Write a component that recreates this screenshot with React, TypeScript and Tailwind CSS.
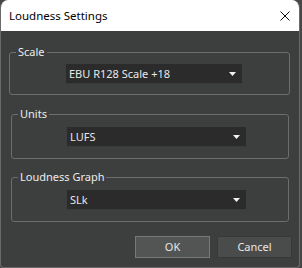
import React from "react";

const FONT = { fontFamily: '"Noto Sans", "Open Sans", Arial, sans-serif' };

function Combo({ value, width }: { value: string; width: string }) {
  return (
    <div
      className={`${width} h-[20px] bg-[#2b2b2b] border-b border-[#3a3a3a] flex items-center justify-between pl-[3px] pr-[6px] text-[11px] text-[#e8e8e8]`}
    >
      <span className="leading-none">{value}</span>
      <svg width="7" height="4" viewBox="0 0 7 4">
        <path d="M0 0h7L3.5 4z" fill="#f2f2f2" />
      </svg>
    </div>
  );
}

function Group({
  label,
  value,
  box,
  inner,
  comboWidth,
}: {
  label: string;
  value: string;
  box: string;
  inner: string;
  comboWidth: string;
}) {
  return (
    <fieldset className={`${box} border border-[#6c6e6d] rounded-[3px] box-border`}>
      <legend className="ml-[6px] px-[2px] text-[11px] leading-[14px] text-[#ececec]">{label}</legend>
      <div className={inner}>
        <Combo value={value} width={comboWidth} />
      </div>
    </fieldset>
  );
}

export default function App() {
  return (
    <div className="w-[302px] h-[268px] bg-[#474747] overflow-hidden" style={FONT}>
      <div className="w-[300px] h-[268px] bg-[#3d3f3e] rounded-t-[8px] rounded-b-[4px] border-l border-r border-b border-[#6a6a6a] overflow-hidden flex flex-col">
        <div className="h-[31px] shrink-0 bg-white flex items-center justify-between pl-[8px] pr-[9px]">
          <span className="text-[11.5px] text-black">Loudness Settings</span>
          <svg width="10" height="10" viewBox="0 0 10 10" className="mt-[1px]">
            <path d="M0.5 0.5L9.5 9.5M9.5 0.5L0.5 9.5" stroke="#111" strokeWidth="1" />
          </svg>
        </div>

        <div className="flex flex-col pt-[14px]">
          <Group
            label="Scale"
            value="EBU R128 Scale +18"
            box="ml-[8px] w-[281px] h-[50px]"
            inner="pl-[56px] pt-[5px]"
            comboWidth="w-[176px]"
          />
          <Group
            label="Units"
            value="LUFS"
            box="ml-[10px] mt-[12px] w-[278px] h-[52px]"
            inner="pl-[55px] pt-[6px]"
            comboWidth="w-[179px]"
          />
          <Group
            label="Loudness Graph"
            value="SLk"
            box="ml-[10px] mt-[11px] w-[278px] h-[52px]"
            inner="pl-[55px] pt-[6px]"
            comboWidth="w-[179px]"
          />

          <div className="flex justify-end gap-[7px] mt-[14px] pr-[7px] text-[11px] text-[#e8e8e8]">
            <button className="w-[75px] h-[22px] bg-[#525554] border border-[#777978] flex items-center justify-center">
              OK
            </button>
            <button className="w-[75px] h-[22px] bg-[#4a4c4b] border border-[#373938] flex items-center justify-center">
              Cancel
            </button>
          </div>
        </div>
      </div>
    </div>
  );
}
